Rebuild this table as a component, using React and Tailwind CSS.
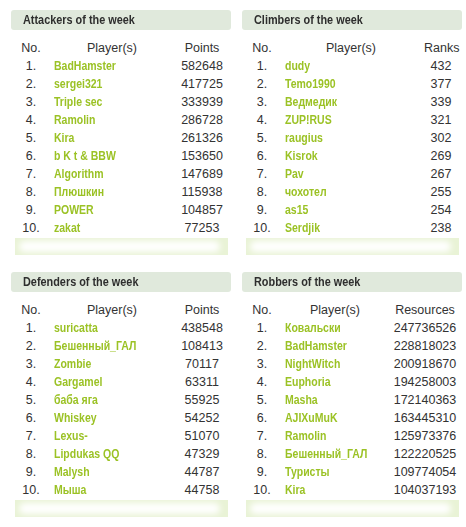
import React from "react";

const panels = [
  {
    title: "Attackers of the week",
    col: "Points",
    widths: [32, 130, 50],
    rows: [
      ["BadHamster", "582648"],
      ["sergei321", "417725"],
      ["Triple sec", "333939"],
      ["Ramolin", "286728"],
      ["Kira", "261326"],
      ["b K t & BBW", "153650"],
      ["Algorithm", "147689"],
      ["Плюшкин", "115938"],
      ["POWER", "104857"],
      ["zakat", "77253"],
    ],
  },
  {
    title: "Climbers of the week",
    col: "Ranks",
    widths: [32, 146, 34],
    rows: [
      ["dudy", "432"],
      ["Temo1990", "377"],
      ["Ведмедик", "339"],
      ["ZUP!RUS", "321"],
      ["raugius", "302"],
      ["Kisrok", "269"],
      ["Pav", "267"],
      ["чохотел", "255"],
      ["as15", "254"],
      ["Serdjik", "238"],
    ],
  },
  {
    title: "Defenders of the week",
    col: "Points",
    widths: [32, 130, 50],
    rows: [
      ["suricatta", "438548"],
      ["Бешенный_ГАЛ", "108413"],
      ["Zombie", "70117"],
      ["Gargamel", "63311"],
      ["баба яга", "55925"],
      ["Whiskey", "54252"],
      ["Lexus-", "51070"],
      ["Lipdukas QQ", "47329"],
      ["Malysh", "44787"],
      ["Мыша", "44758"],
    ],
  },
  {
    title: "Robbers of the week",
    col: "Resources",
    widths: [32, 114, 66],
    rows: [
      ["Ковальски", "247736526"],
      ["BadHamster", "228818023"],
      ["NightWitch", "200918670"],
      ["Euphoria", "194258003"],
      ["Masha", "172140363"],
      ["AJIXuMuK", "163445310"],
      ["Ramolin", "125973376"],
      ["Бешенный_ГАЛ", "122220525"],
      ["Туристы", "109774054"],
      ["Kira", "104037193"],
    ],
  },
];

function Panel({ p, right }) {
  return (
    <div className="w-[220px] flex flex-col">
      <div className="h-[20px] rounded-[3px] bg-[#e0e9dc] pl-[12px] flex items-center text-[12.5px] font-bold text-[#2e2e2e] leading-none whitespace-nowrap">
        <span className="inline-block origin-left scale-x-[0.87]" style={{ fontFamily: '"Liberation Sans", Arial, sans-serif' }}>
          {p.title}
        </span>
      </div>
      <div className={right ? "mt-[9px] ml-[4px] mr-[3px]" : "mt-[9px] ml-[4px] mr-[4px]"}>
        <table className="w-[212px] table-fixed border-collapse text-[12.5px] leading-[18px] text-[#333]">
          <colgroup>
            {p.widths.map((w, i) => (
              <col key={i} style={{ width: w }} />
            ))}
          </colgroup>
          <thead>
            <tr className="h-[18px]">
              <th className="font-normal text-center p-0">No.</th>
              <th className="font-normal text-center p-0">Player(s)</th>
              <th className="font-normal text-center p-0">{p.col}</th>
            </tr>
          </thead>
          <tbody>
            {p.rows.map((r, i) => (
              <tr key={i} className="h-[18px]">
                <td className="text-center p-0">{i + 1}.</td>
                <td className="p-0 pl-[7px] whitespace-nowrap">
                  <span
                    className="inline-block origin-left scale-x-[0.84] font-bold text-[#9bc225]"
                    style={{ fontFamily: '"Liberation Sans", Arial, sans-serif' }}
                  >
                    {r[0]}
                  </span>
                </td>
                <td className="text-center p-0">{r[1]}</td>
              </tr>
            ))}
          </tbody>
        </table>
        <div className="relative mt-[1px] h-[17px] w-[213px] bg-[#e9f3d6] overflow-hidden">
          <div className="absolute left-[4px] right-[8px] top-[3px] bottom-[3px] bg-white rounded-full blur-[3px]"></div>
        </div>
      </div>
    </div>
  );
}

export default function App() {
  return (
    <div
      className="w-[466px] h-[527px] bg-white pt-[10px] pl-[11px]"
      style={{ fontFamily: '"Liberation Sans Narrow", "Liberation Sans", Arial, sans-serif' }}
    >
      <div className="grid grid-cols-[220px_220px] gap-x-[11px] gap-y-[17px]">
        <Panel p={panels[0]} />
        <Panel p={panels[1]} right />
        <Panel p={panels[2]} />
        <Panel p={panels[3]} right />
      </div>
    </div>
  );
}
